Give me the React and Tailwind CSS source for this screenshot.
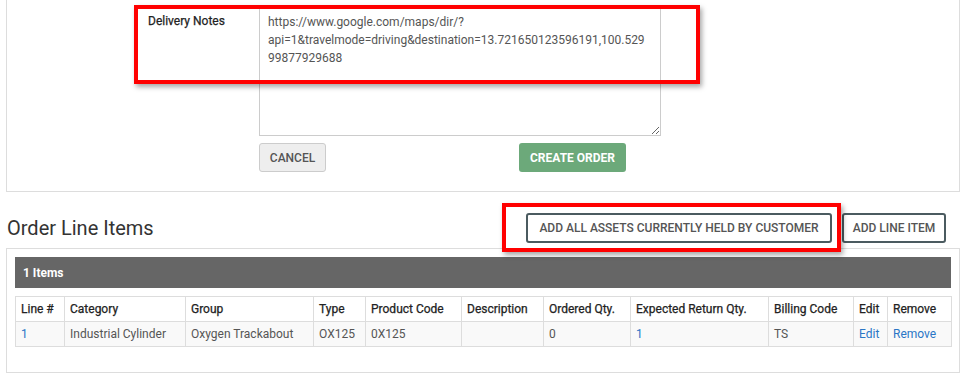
const columns = [
  { label: "Line #", w: "w-[49px]" },
  { label: "Category", w: "w-[121px]" },
  { label: "Group", w: "w-[128px]" },
  { label: "Type", w: "w-[52px]" },
  { label: "Product Code", w: "w-[96px]" },
  { label: "Description", w: "w-[82px]" },
  { label: "Ordered Qty.", w: "w-[87px]" },
  { label: "Expected Return Qty.", w: "w-[138px]" },
  { label: "Billing Code", w: "w-[85px]" },
  { label: "Edit", w: "w-[34px]" },
  { label: "Remove", w: "w-[64px]" },
];

const row = ["1", "Industrial Cylinder", "Oxygen Trackabout", "OX125", "0X125", "", "0", "1", "TS"];

function Highlight({ className }) {
  return (
    <div
      className={`pointer-events-none absolute border-4 border-[#ff0000] shadow-[2px_3px_5px_rgba(0,0,0,0.35)] ${className}`}
    />
  );
}

export default function App() {
  return (
    <div className="relative h-[381px] w-[974px] overflow-hidden bg-white font-['Roboto',sans-serif] text-[12px] text-[#333]">
      <div className="px-[6px]">
        {/* order form panel */}
        <section className="w-[954px] border-x border-b border-[#ddd] pb-[19px] pt-[5px]">
          <div className="ml-[141px] flex">
            <label className="w-[111px] pt-[7px] leading-[18px] text-[#222] [-webkit-text-stroke:0.25px_#222]">
              Delivery Notes
            </label>
            <textarea
              readOnly
              className="h-[131px] w-[402px] resize-y border border-[#ccc] pl-[8px] pr-[12px] pt-[7px] leading-[18px] text-[#555] outline-none"
              value="https://www.google.com/maps/dir/?api=1&travelmode=driving&destination=13.721650123596191,100.52999877929688"
            />
          </div>
          <div className="ml-[252px] mt-[7px] flex h-[29px]">
            <button className="h-[29px] w-[67px] rounded-[3px] border border-[#ccc] bg-[#eee] font-medium uppercase text-[#555]">
              Cancel
            </button>
            <button className="ml-[193px] h-[29px] w-[107px] rounded-[3px] bg-[#6ca97a] font-bold uppercase text-white">
              Create Order
            </button>
          </div>
        </section>

        {/* line items header */}
        <div className="mt-[21px] flex h-[30px] w-[954px] items-center">
          <h2 className="ml-[1px] text-[20px] font-normal text-[#333]">Order Line Items</h2>
          <div className="ml-auto mr-[14px] flex gap-[10px]">
            <button className="h-[30px] w-[306px] rounded-[3px] border-2 border-[#4b5b60] bg-white font-medium uppercase text-[#555]">
              Add all assets currently held by customer
            </button>
            <button className="h-[30px] w-[104px] rounded-[3px] border-2 border-[#4b5b60] bg-white font-medium uppercase text-[#555]">
              Add line item
            </button>
          </div>
        </div>

        {/* line items table panel */}
        <section className="mt-[5px] h-[125px] w-[954px] border border-[#ddd] px-[8px] pt-[8px]">
          <div className="flex h-[31px] items-center bg-[#666] px-[8px] font-bold text-white">1 Items</div>
          <table className="mt-[8px] w-[936px] table-fixed border-collapse">
            <thead>
              <tr className="h-[25px]">
                {columns.map((c) => (
                  <th
                    key={c.label}
                    className={`${c.w} border border-[#ddd] px-[5px] text-left font-normal text-[#222] [-webkit-text-stroke:0.25px_#222]`}
                  >
                    {c.label}
                  </th>
                ))}
              </tr>
            </thead>
            <tbody>
              <tr className="h-[25px] bg-[#f9f9f9]">
                {row.map((v, i) => (
                  <td
                    key={i}
                    className={`border border-[#ddd] px-[5px] ${i === 0 || i === 7 ? "text-[#2a76c6]" : "text-[#555]"}`}
                  >
                    {v}
                  </td>
                ))}
                <td className="border border-[#ddd] px-[5px] text-[#2a76c6]">Edit</td>
                <td className="border border-[#ddd] px-[5px] text-[#2a76c6]">Remove</td>
              </tr>
            </tbody>
          </table>
        </section>
      </div>

      <Highlight className="left-[134px] top-[5px] h-[79px] w-[566px]" />
      <Highlight className="left-[502px] top-[203px] h-[49px] w-[339px]" />
    </div>
  );
}
